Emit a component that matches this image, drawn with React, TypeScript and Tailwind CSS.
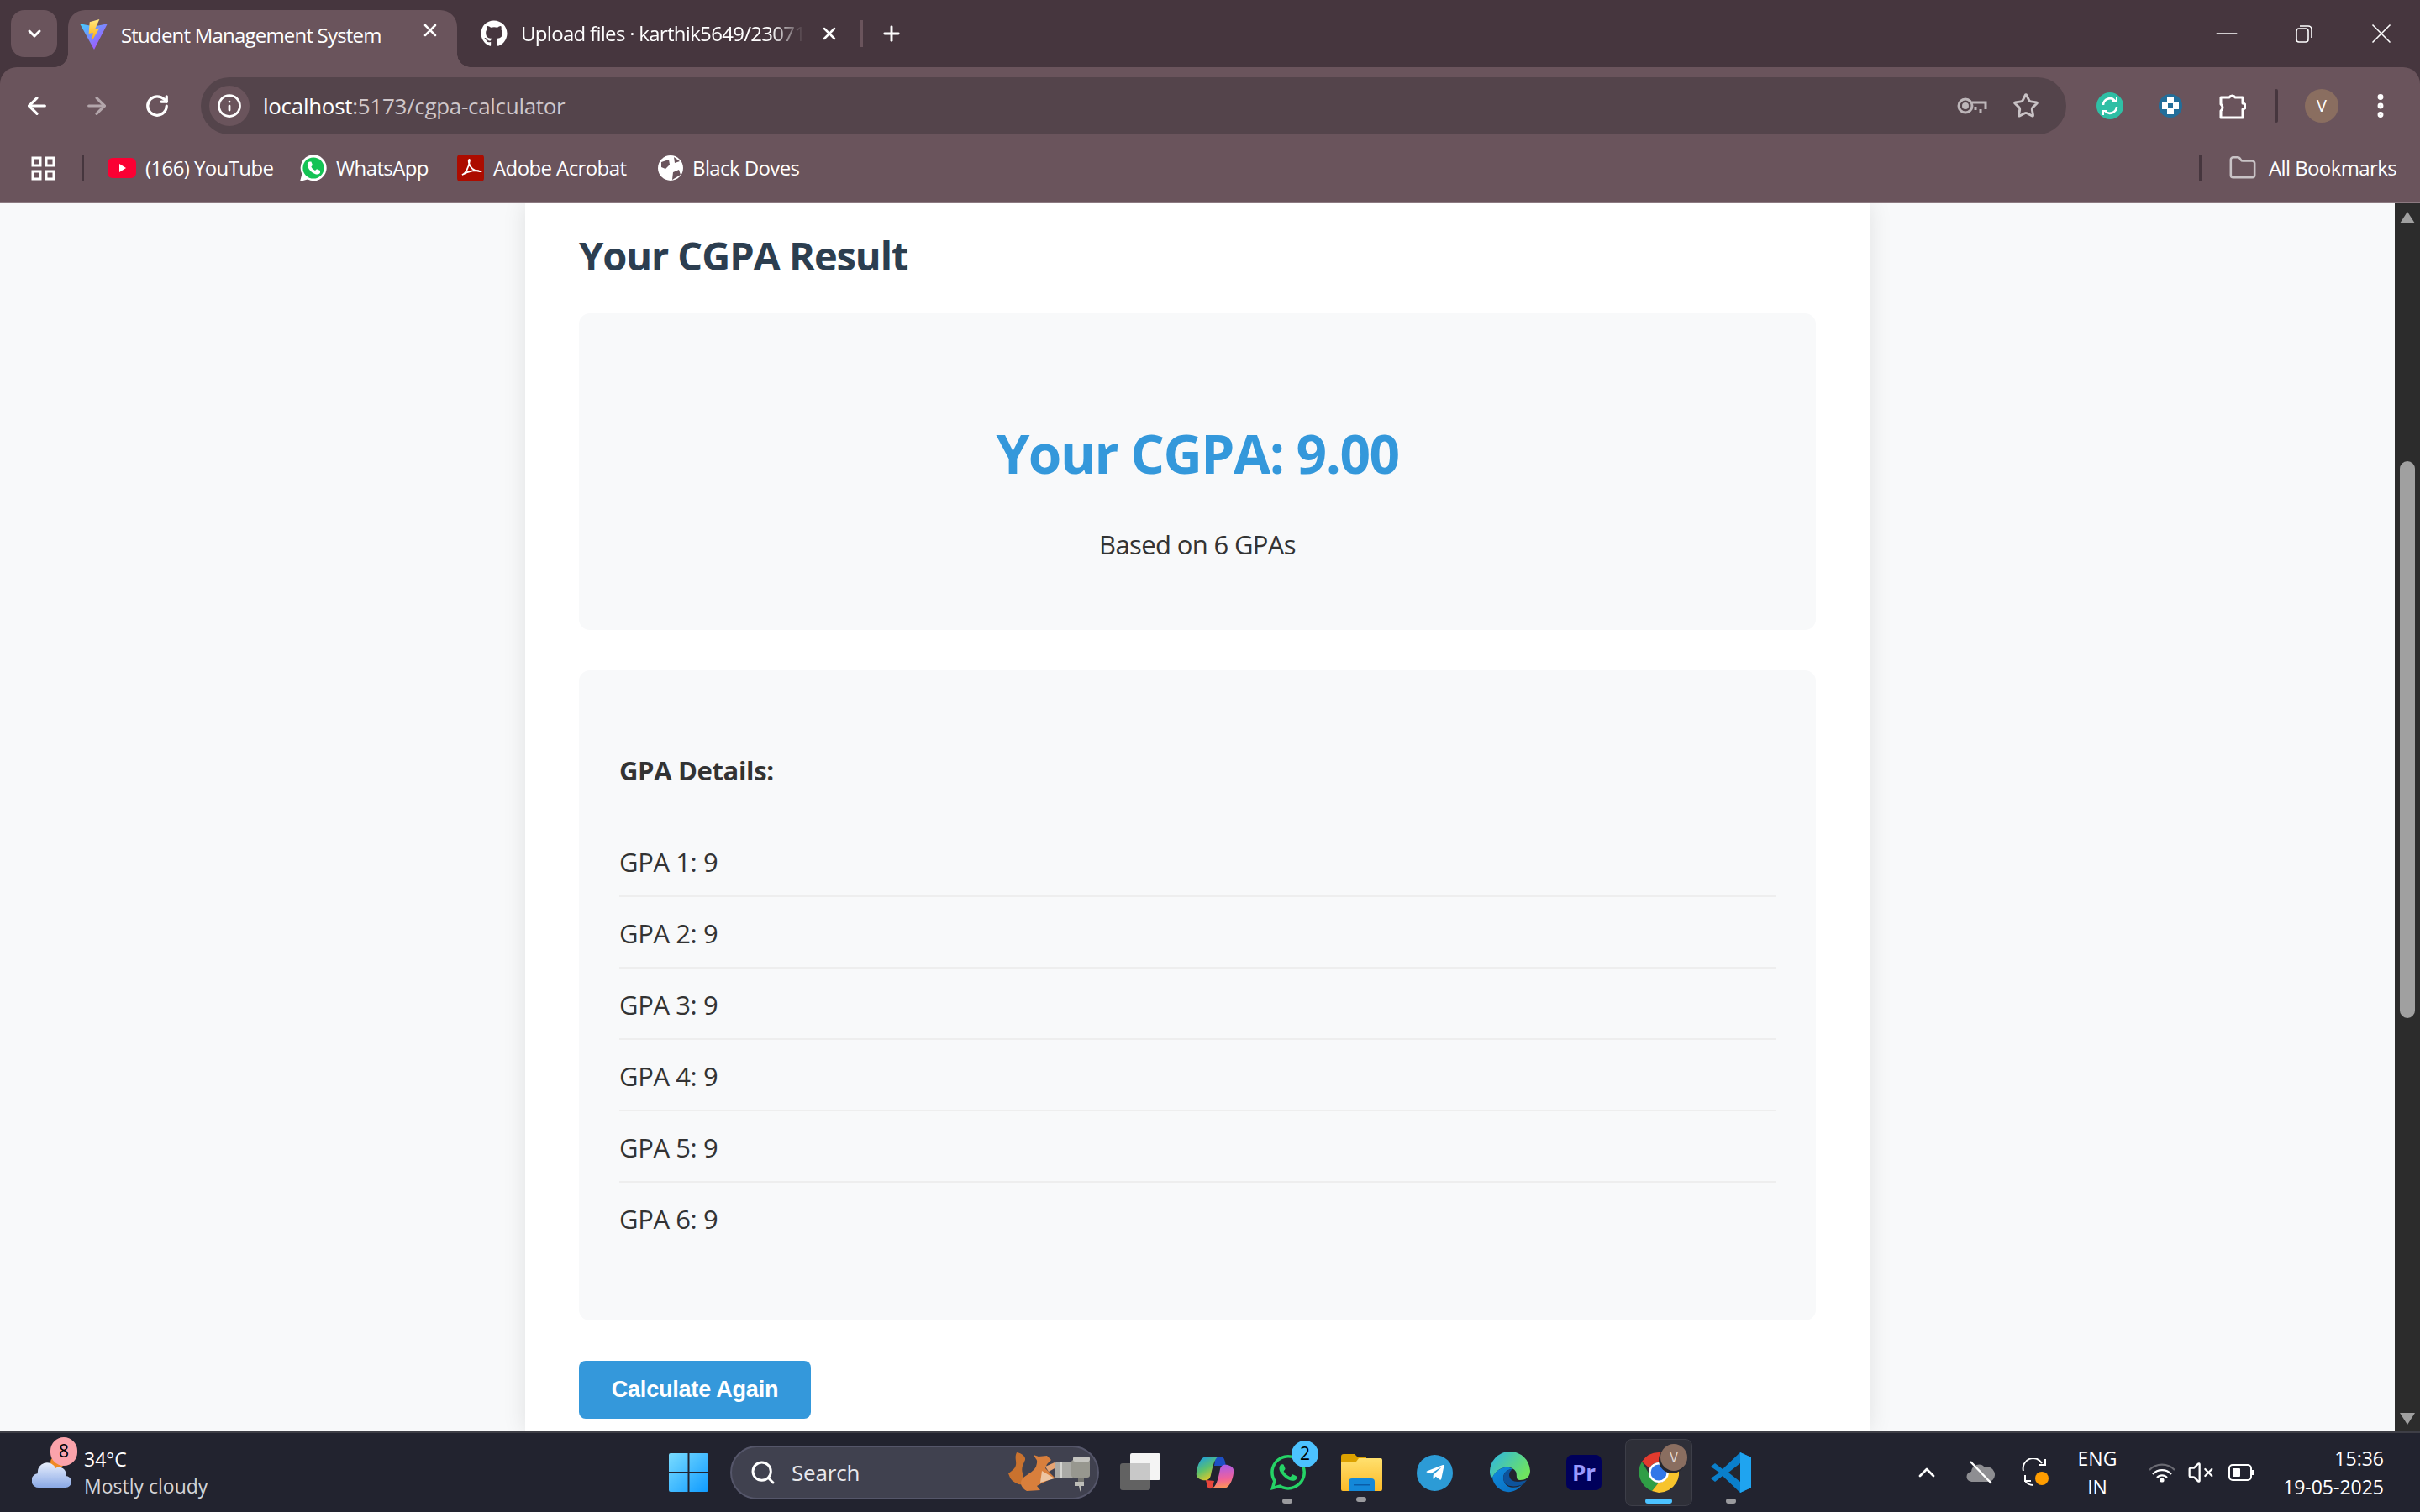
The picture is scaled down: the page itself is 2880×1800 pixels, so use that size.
import { ArrowLeft, ArrowRight, ChevronDown, ChevronUp, EllipsisVertical, Folder, Info, Minus, Plus, RotateCw, Search, Star, VolumeX, X } from 'lucide-react'
import { FaGithub, FaTelegramPlane, FaWhatsapp } from 'react-icons/fa'

const gpas = [1, 2, 3, 4, 5, 6]

function ViteLogo() {
  return (
    <svg viewBox="0 0 32 34" className="h-[36px] w-[34px]">
      <defs>
        <linearGradient id="vite-a" x1="0" y1="0" x2="1" y2="1">
          <stop offset="0" stopColor="#41d1ff" />
          <stop offset="1" stopColor="#bd34fe" />
        </linearGradient>
        <linearGradient id="vite-b" x1="0" y1="0" x2="0" y2="1">
          <stop offset="0" stopColor="#ffea83" />
          <stop offset="1" stopColor="#ffa800" />
        </linearGradient>
      </defs>
      <path d="M0 5 L16 8 L31 5 L16 34 Z" fill="url(#vite-a)" />
      <path d="M22 0 L11 3 L10 16 L15 15 L13 25 L22 10 L17 11 Z" fill="url(#vite-b)" />
    </svg>
  )
}

function KeyIcon() {
  return (
    <svg viewBox="0 0 36 26" className="h-[26px] w-[36px]" fill="none" stroke="#bdb6b9" strokeWidth="3">
      <circle cx="10" cy="13" r="8" />
      <circle cx="10" cy="13" r="2.5" fill="#bdb6b9" />
      <path d="M18 9 H34 V17 M28 17 V21 M22 14 V18" />
    </svg>
  )
}

function SyncExtension() {
  return (
    <svg viewBox="0 0 32 32" className="h-[32px] w-[32px]" fill="none" stroke="#fff" strokeWidth="2.6">
      <circle cx="16" cy="16" r="16" fill="#2fbfa5" stroke="none" />
      <path d="M8 15 A8 8 0 0 1 22 10" />
      <path d="M24 17 A8 8 0 0 1 10 22" />
      <path d="M19 10 H24 V5 M13 22 H8 V27" strokeWidth="2" />
    </svg>
  )
}

function BlueExtension() {
  return (
    <svg viewBox="0 0 28 28" className="h-[28px] w-[28px]">
      <circle cx="14" cy="14" r="14" fill="#236e9a" />
      <path d="M10 4 H18 V10 H24 V18 H18 V24 H10 V18 H4 V10 H10 Z" fill="#fff" />
      <rect x="11" y="11" width="6" height="6" fill="#236e9a" />
    </svg>
  )
}

function PuzzleIcon() {
  return (
    <svg viewBox="0 0 32 32" className="h-[32px] w-[32px]" fill="none" stroke="#fff" strokeWidth="3" strokeLinejoin="round">
      <path d="M2 6 H12 A4 4 0 0 1 19 6 H28 V13 A3.5 3.5 0 0 1 28 20 V30 H2 V22 A5 5 0 0 0 2 14 Z" />
    </svg>
  )
}

function AppsIcon() {
  return (
    <svg viewBox="0 0 29 29" className="h-[29px] w-[29px]" fill="none" stroke="#fff" strokeWidth="3">
      <rect x="2" y="2" width="9" height="9" />
      <rect x="18" y="2" width="9" height="9" />
      <rect x="2" y="18" width="9" height="9" />
      <rect x="18" y="18" width="9" height="9" />
    </svg>
  )
}

function YoutubeIcon() {
  return (
    <svg viewBox="0 0 34 24" className="h-[24px] w-[34px]">
      <rect width="34" height="24" rx="6" fill="#fb0033" />
      <path d="M14 7 L22 12 L14 17 Z" fill="#fff" />
    </svg>
  )
}

function WhatsappBookmark() {
  return (
    <svg viewBox="0 0 32 32" className="h-[32px] w-[32px]">
      <path d="M0 32 L2.4 23 A15.5 15.5 0 1 1 9 29.6 Z" fill="#fff" />
      <circle cx="16" cy="16" r="12.6" fill="#14c354" />
      <path d="M11 8.5 L13.4 8.5 L15 12.6 L13.4 14.6 C14.4 16.8 15.8 18 18 19 L20 17.2 L24 19 L24 21.4 C23 23.4 20.6 24 18.4 23.2 C13.8 21.6 10.8 18.6 9.2 14 C8.4 11.8 9 9.6 11 8.5 Z" fill="#fff" />
    </svg>
  )
}

function AcrobatIcon() {
  return (
    <svg viewBox="0 0 32 32" className="h-[32px] w-[32px]" fill="none">
      <rect width="32" height="32" rx="4" fill="#ac0c00" />
      <path d="M6 24 C10 23 14 15 15 7 C15 5 13 6 14 10 C15 15 20 20 27 20 C24 18 14 19 6 24 Z" stroke="#fff" strokeWidth="1.8" />
    </svg>
  )
}

function GlobeIcon() {
  return (
    <svg viewBox="0 0 30 30" className="h-[30px] w-[30px]">
      <circle cx="15" cy="15" r="15" fill="#fff" />
      <path d="M4 8 L13 5 L14 11 L9 16 L4 14 Z M17 29 L18 20 L25 17 L27 23 Z M19 2 L26 7 L20 9 Z" fill="#6a545c" />
    </svg>
  )
}

function WeatherIcon() {
  return (
    <svg viewBox="0 0 48 40" className="h-[40px] w-[48px]">
      <defs>
        <linearGradient id="cloud" x1="0" y1="0" x2="0" y2="1">
          <stop offset="0" stopColor="#e7eefc" />
          <stop offset="1" stopColor="#8aa9e6" />
        </linearGradient>
      </defs>
      <circle cx="30" cy="8" r="8" fill="#f08a24" />
      <path d="M9 38 A8.5 8.5 0 0 1 7 21 A11 11 0 0 1 28 15 A8 8 0 0 1 40 24 A7 7 0 0 1 40 38 Z" fill="url(#cloud)" />
    </svg>
  )
}

function WindowsLogo() {
  return (
    <svg viewBox="0 0 47 46" className="h-[46px] w-[47px]">
      <defs>
        <linearGradient id="win" x1="0" y1="0" x2="1" y2="1">
          <stop offset="0" stopColor="#7adcff" />
          <stop offset="1" stopColor="#0f9bff" />
        </linearGradient>
      </defs>
      <path d="M0 2 A2 2 0 0 1 2 0 H22.5 V22 H0 Z M24.5 0 H45 A2 2 0 0 1 47 2 V22 H24.5 Z M0 24 H22.5 V46 H2 A2 2 0 0 1 0 44 Z M24.5 24 H47 V44 A2 2 0 0 1 45 46 H24.5 Z" fill="url(#win)" />
    </svg>
  )
}

function SquirrelCamera() {
  return (
    <svg viewBox="0 0 100 48" className="h-[48px] w-[100px]">
      <path d="M10 0 C16 1 21 5 20 9 C18 14 15 18 17 25 L20 38 C14 40 5 36 2 30 L0 25 C4 22 8 20 9 15 C10 10 7 6 10 0 Z" fill="#c9722e" />
      <path d="M30 3 L36 5 L46 4 L51 9 L46 14 L44 19 L55 30 C48 33 40 36 34 40 L38 45 L22 46 C15 42 13 36 17 31 C22 26 29 24 33 17 C34 13 35 10 33 8 Z" fill="#d97f3c" />
      <path d="M44 17 L55 12 L57 18 L48 23 Z" fill="#e6a473" />
      <path d="M40 22 L55 31 L38 36 Z" fill="#edc4a0" />
      <rect x="55" y="12" width="22" height="19" rx="2" fill="#aaaaa6" />
      <rect x="61" y="12" width="3" height="19" fill="#d4d4d0" />
      <rect x="75" y="9" width="22" height="21" rx="3" fill="#97978f" />
      <rect x="77" y="5" width="20" height="6" rx="2" fill="#c4c4c0" />
      <rect x="83" y="30" width="7" height="5" fill="#777772" />
      <path d="M79 35 H90 V40 H87 L85.5 47 L84 40 H79 Z" fill="#bdbdb8" />
    </svg>
  )
}

function TaskViewIcon() {
  return (
    <svg viewBox="0 0 49 46" className="h-[46px] w-[49px]">
      <rect x="0" y="12" width="36" height="32" rx="3" fill="#626262" />
      <rect x="12" y="0" width="36" height="32" rx="2" fill="#f4f4f4" />
      <rect x="12" y="12" width="24" height="20" fill="#c8c8c8" />
    </svg>
  )
}

function CopilotIcon() {
  return (
    <svg viewBox="0 0 46 42" className="h-[42px] w-[46px]">
      <defs>
        <linearGradient id="cop-a" x1="0.2" y1="0" x2="0.7" y2="1">
          <stop offset="0" stopColor="#1b9de2" />
          <stop offset="0.5" stopColor="#5ec16b" />
          <stop offset="1" stopColor="#f7c81e" />
        </linearGradient>
        <linearGradient id="cop-b" x1="0.5" y1="0" x2="0.6" y2="1">
          <stop offset="0" stopColor="#a95bea" />
          <stop offset="0.6" stopColor="#f0629a" />
          <stop offset="1" stopColor="#fd9a52" />
        </linearGradient>
      </defs>
      <path d="M24 2 H31 C34 3 35 8 36 13 L22 13 C23 8 23 5 24 2 Z" fill="#1d4fc4" />
      <path d="M12 2 H27 C23 4 21 10 18 24 C17 30 12 31 8 30 C2 28 0 26 1 20 C2 12 6 3 12 2 Z" fill="url(#cop-a)" />
      <path d="M12 30 L22 31 L20 38 C19 41 15 41 14 38 Z" fill="#e8463c" />
      <path d="M34 40 H19 C24 38 26 32 29 17 C30 12 34 11 38 12 C44 14 46 16 45 22 C44 30 40 39 34 40 Z" fill="url(#cop-b)" />
    </svg>
  )
}

function FolderIcon() {
  return (
    <svg viewBox="0 0 49 44" className="h-[44px] w-[49px]">
      <defs>
        <linearGradient id="folder" x1="0" y1="0" x2="0" y2="1">
          <stop offset="0" stopColor="#ffe06e" />
          <stop offset="1" stopColor="#fdbb28" />
        </linearGradient>
      </defs>
      <path d="M0 3 A3 3 0 0 1 3 0 H16 L20 4 H30 V12 H0 Z" fill="#dca100" />
      <path d="M0 9 L18 9 L21 5 H47 A2 2 0 0 1 49 7 V42 A2 2 0 0 1 47 44 H2 A2 2 0 0 1 0 42 Z" fill="url(#folder)" />
      <path d="M9 44 V33 A4 4 0 0 1 13 29 H36 A4 4 0 0 1 40 33 V44 Z" fill="#1488d8" />
      <rect x="15" y="36" width="19" height="1.5" fill="#0a5da8" />
    </svg>
  )
}

function TelegramIcon() {
  return (
    <span className="flex h-[43px] w-[43px] items-center justify-center rounded-full bg-[#2c9bd6]">
      <FaTelegramPlane className="h-[24px] w-[24px] text-white" />
    </span>
  )
}

function EdgeIcon() {
  return (
    <svg viewBox="0 0 48 48" className="h-[48px] w-[48px]">
      <defs>
        <linearGradient id="edge-a" x1="0" y1="0" x2="1" y2="0.6">
          <stop offset="0" stopColor="#2bb4e8" />
          <stop offset="1" stopColor="#6fe35f" />
        </linearGradient>
        <linearGradient id="edge-b" x1="0" y1="0" x2="1" y2="1">
          <stop offset="0" stopColor="#0f8ddd" />
          <stop offset="1" stopColor="#0a6cc0" />
        </linearGradient>
      </defs>
      <path d="M0 24 A24 24 0 0 1 48 22 C48 30 42 33 36 33 C30 33 33 27 31 23 C27 15 10 15 3 30 C1 28 0 26 0 24 Z" fill="url(#edge-a)" />
      <path d="M3 30 C8 18 22 15 27 20 C19 20 14 27 17 35 C20 43 32 44 39 38 C33 46 24 49 16 46 C8 43 4 36 3 30 Z M0 24 L3 30 L1 29 Z" fill="url(#edge-b)" />
      <path d="M27 20 C19 20 14 27 17 35 C20 41 30 42 40 38 L44 33 C38 35 30 36 26 33 C21 28 23 23 27 20 Z" fill="#0d539c" />
    </svg>
  )
}

function ChromeIcon() {
  return (
    <svg viewBox="0 0 48 48" className="h-[48px] w-[48px]">
      <path d="M24 0 A24 24 0 0 1 45 12 H24 A12 12 0 0 0 13 19 L4 11 A24 24 0 0 1 24 0 Z" fill="#e33b2e" />
      <path d="M4 11 L14 28 A12 12 0 0 0 24 36 L16 46 A24 24 0 0 1 4 11 Z" fill="#2f9e46" />
      <path d="M45 12 A24 24 0 0 1 24 48 L16 46 L24 36 A12 12 0 0 0 34 18 Z" fill="#f7c42c" />
      <circle cx="24" cy="24" r="12" fill="#fff" />
      <circle cx="24" cy="24" r="9.5" fill="#3178e8" />
    </svg>
  )
}

function VsCodeIcon() {
  return (
    <svg viewBox="0 0 48 48" className="h-[48px] w-[48px]">
      <path d="M35 0 L48 6 V42 L35 48 L14 28 L5 35 L0 31 L10 24 L0 17 L5 13 L14 20 Z" fill="#0a7fcb" />
      <path d="M35 0 L48 6 V42 L35 48 Z" fill="#1fa4f0" />
      <path d="M35 13 L21 24 L35 35 Z" fill="#23262f" />
    </svg>
  )
}

function CloudOffIcon() {
  return (
    <svg viewBox="0 0 34 28" className="h-[28px] w-[34px]" fill="none">
      <path d="M7 25 A6 6 0 0 1 6 13 A9 9 0 0 1 22 8 A7 7 0 0 1 28 25 Z" fill="#8e8e92" />
      <path d="M5 1 L30 27" stroke="#fff" strokeWidth="2.4" />
    </svg>
  )
}

function SyncTrayIcon() {
  return (
    <svg viewBox="0 0 34 34" className="h-[34px] w-[34px]" fill="none" stroke="#fff" strokeWidth="2">
      <path d="M2 15 A12 12 0 0 1 24 6" />
      <path d="M28 1 V8 H21" />
      <path d="M4 20 V27 H11" />
      <path d="M4 27 A12 12 0 0 0 14 32" />
      <circle cx="24" cy="24" r="8" fill="#ff9d00" stroke="none" />
    </svg>
  )
}

function WifiIcon() {
  return (
    <svg viewBox="0 0 32 24" className="h-[24px] w-[32px]" fill="none" stroke="#fff" strokeWidth="2.2">
      <path d="M1 9 A21 21 0 0 1 31 9" stroke="#6a6a72" />
      <path d="M5 14 A15 15 0 0 1 27 14" />
      <path d="M10 18 A8 8 0 0 1 22 18" />
      <circle cx="16" cy="21" r="2.6" fill="#fff" stroke="none" />
    </svg>
  )
}

function BatteryIcon() {
  return (
    <svg viewBox="0 0 32 20" className="h-[20px] w-[32px]" fill="none" stroke="#fff" strokeWidth="2">
      <rect x="1" y="1" width="26" height="18" rx="4" />
      <rect x="5" y="5" width="9" height="10" rx="1" fill="#fff" stroke="none" />
      <path d="M28 7 H31 V13 H28 Z" fill="#fff" stroke="none" />
    </svg>
  )
}

function Bookmark({ icon, label, width }: { icon: React.ReactNode; label: string; width: string }) {
  return (
    <div className={`flex items-center gap-[11px] ${width}`}>
      {icon}
      <span className="whitespace-nowrap text-[24px] tracking-[-0.6px] text-white">{label}</span>
    </div>
  )
}

function Browser() {
  return (
    <div className="shrink-0 bg-[#46363e] font-['Open_Sans',sans-serif] text-white">
      {/* tab strip */}
      <div className="flex h-[80px] items-start pt-[12px]">
        <div className="ml-[13px] flex h-[56px] w-[55px] items-center justify-center rounded-[16px] bg-[#6a545c]">
          <ChevronDown className="h-[24px] w-[24px]" strokeWidth={3} />
        </div>
        <div className="relative ml-[13px] flex h-[68px] w-[463px] items-start rounded-t-[20px] bg-[#6a545c] pl-[14px] pt-[11px]">
          <div className="absolute bottom-0 left-[-16px] h-[16px] w-[16px] bg-[radial-gradient(circle_at_0_0,transparent_15.5px,#6a545c_16px)]" />
          <div className="absolute bottom-0 right-[-16px] h-[16px] w-[16px] bg-[radial-gradient(circle_at_100%_0,transparent_15.5px,#6a545c_16px)]" />
          <ViteLogo />
          <span className="ml-[15px] mt-[3px] whitespace-nowrap text-[24px] leading-[32px] tracking-[-0.8px]">Student Management System</span>
          <X className="absolute right-[20px] top-[12px] h-[24px] w-[24px]" strokeWidth={2.5} />
        </div>
        <div className="ml-[28px] mt-[12px] flex items-start">
          <FaGithub className="h-[32px] w-[32px]" />
          <span className="ml-[16px] w-[337px] overflow-hidden whitespace-nowrap text-[24px] leading-[32px] tracking-[-0.7px] [mask-image:linear-gradient(to_right,black_88%,transparent)]">Upload files · karthik5649/23071</span>
          <X className="ml-[18px] mt-[4px] h-[24px] w-[24px] shrink-0" strokeWidth={2.5} />
          <div className="ml-[25px] mt-[0px] h-[32px] w-[3px] shrink-0 bg-[#6a545c]" />
          <Plus className="ml-[20px] mt-[2px] h-[28px] w-[28px] shrink-0" strokeWidth={2.5} />
        </div>
        <div className="ml-auto mr-[26px] mt-[8px] flex items-center gap-[52px]">
          <Minus className="h-[40px] w-[40px]" strokeWidth={1} />
          <div className="flex h-[40px] w-[40px] items-center justify-center">
            <svg viewBox="0 0 20 22" className="h-[22px] w-[20px]" fill="none" stroke="#fff" strokeWidth="1.6">
              <rect x="1" y="5" width="14" height="16" rx="3" />
              <path d="M5 2 H15 A4 4 0 0 1 19 6 V16" />
            </svg>
          </div>
          <X className="h-[40px] w-[40px]" strokeWidth={1} />
        </div>
      </div>
      {/* toolbar and bookmarks */}
      <div className="rounded-t-[20px] border-b-2 border-[#8c7a81] bg-[#6a545c] pt-[6px]">
        <div className="flex h-[80px] items-center pl-[28px]">
          <ArrowLeft className="h-[32px] w-[32px]" strokeWidth={2.4} />
          <ArrowRight className="ml-[39px] h-[32px] w-[32px] text-[#b3a6ab]" strokeWidth={2.4} />
          <RotateCw className="ml-[41px] h-[30px] w-[30px]" strokeWidth={2.6} />
          <div className="ml-[37px] flex h-[68px] w-[2220px] items-center rounded-full bg-[#54444b] pl-[10px] pr-[32px]">
            <div className="flex h-[48px] w-[48px] items-center justify-center rounded-full bg-[#6a545c]">
              <Info className="h-[30px] w-[30px]" strokeWidth={2.2} />
            </div>
            <span className="ml-[16px] text-[26px] tracking-[-0.3px]">
              localhost<span className="text-[#cfc7ca]">:5173/cgpa-calculator</span>
            </span>
            <div className="ml-auto flex items-center gap-[30px]">
              <KeyIcon />
              <Star className="h-[32px] w-[32px] text-[#c9c3c6]" strokeWidth={2.2} />
            </div>
          </div>
          <div className="ml-[36px]"><SyncExtension /></div>
          <div className="ml-[42px]"><BlueExtension /></div>
          <div className="ml-[44px]"><PuzzleIcon /></div>
          <div className="ml-[34px] h-[40px] w-[4px] rounded-full bg-[#46363e]" />
          <div className="ml-[32px] flex h-[40px] w-[40px] items-center justify-center rounded-full bg-[#8a6e60] text-[20px]">V</div>
          <EllipsisVertical className="ml-[32px] h-[36px] w-[36px]" strokeWidth={2.6} />
        </div>
        <div className="flex h-[74px] items-center pb-[6px] pl-[37px]">
          <AppsIcon />
          <div className="ml-[31px] mr-[28px] h-[32px] w-[3px] bg-[#46363e]" />
          <Bookmark icon={<YoutubeIcon />} label="(166) YouTube" width="w-[229px]" />
          <Bookmark icon={<WhatsappBookmark />} label="WhatsApp" width="w-[187px]" />
          <Bookmark icon={<AcrobatIcon />} label="Adobe Acrobat" width="w-[239px]" />
          <Bookmark icon={<GlobeIcon />} label="Black Doves" width="w-[1834px]" />
          <div className="h-[32px] w-[3px] bg-[#46363e]" />
          <Folder className="ml-[32px] h-[34px] w-[34px] text-[#c9c3c6]" strokeWidth={1.8} />
          <span className="ml-[14px] whitespace-nowrap text-[24px] tracking-[-0.6px]">All Bookmarks</span>
        </div>
      </div>
    </div>
  )
}

function ScrollBar() {
  return (
    <div className="flex w-[30px] shrink-0 flex-col items-center bg-[#2c2c2c] pb-[8px] pt-[10px]">
      <div className="h-0 w-0 border-x-[9px] border-b-[14px] border-x-transparent border-b-[#a0a0a0]" />
      <div className="mt-[283px] h-[663px] w-[18px] rounded-full bg-[#a0a0a0]" />
      <div className="mt-auto h-0 w-0 border-x-[9px] border-t-[14px] border-x-transparent border-t-[#a0a0a0]" />
    </div>
  )
}

function Page() {
  return (
    <div className="flex min-h-0 flex-1 bg-[#f8f9fa]">
      <main className="flex min-w-0 flex-1 justify-center overflow-hidden font-['Open_Sans',sans-serif]">
        <div className="w-[1600px] bg-white px-[64px] pt-[30px] shadow-[0_0_26px_rgba(0,0,0,0.1)]">
          <h2 className="text-[47px] font-bold leading-[64px] tracking-[-1.1px] text-[#2c3e50]">Your CGPA Result</h2>
          <section className="mt-[37px] flex h-[377px] flex-col items-center rounded-[13px] bg-[#f8f9fa] pt-[122px]">
            <h3 className="text-[64px] font-bold leading-[90px] tracking-[-1.5px] text-[#3498db]">Your CGPA: 9.00</h3>
            <p className="mt-[43px] text-[31px] leading-[40px] tracking-[-0.65px] text-[#333333]">Based on 6 GPAs</p>
          </section>
          <section className="mt-[48px] h-[774px] rounded-[13px] bg-[#f8f9fa] px-[48px] pt-[96px]">
            <h4 className="text-[31px] font-bold leading-[46px] tracking-[-0.35px] text-[#333333]">GPA Details:</h4>
            <ul className="mt-[43px]">
              {gpas.map((n) => (
                <li key={n} className="h-[85px] border-b-2 border-[#eeeeee] pt-[21px] text-[31px] leading-[44px] tracking-[-0.4px] text-[#333333] last:border-b-0">
                  GPA {n}: 9
                </li>
              ))}
            </ul>
          </section>
          <button className="mt-[48px] h-[69px] w-[276px] rounded-[8px] bg-[#3498db] font-['Liberation_Sans',sans-serif] text-[27px] font-bold tracking-[-0.2px] text-white">
            Calculate Again
          </button>
        </div>
      </main>
      <ScrollBar />
    </div>
  )
}

function Taskbar() {
  return (
    <footer className="flex h-[96px] shrink-0 items-center border-t-2 border-[#3e3e46] bg-[#22232f] font-['Open_Sans',sans-serif] text-white">
      <div className="relative ml-[38px] w-[48px]">
        <WeatherIcon />
        <span className="absolute left-[22px] top-[-22px] flex h-[34px] w-[32px] items-center justify-center rounded-full bg-[#fba3ab] text-[21px] text-black">8</span>
      </div>
      <div className="ml-[14px] w-[200px] text-[23px] leading-[32px]">
        <div>34°C</div>
        <div className="text-[#d4d4d8]">Mostly cloudy</div>
      </div>
      <div className="ml-[496px]"><WindowsLogo /></div>
      <div className="ml-[26px] flex h-[64px] w-[439px] items-center rounded-full border-2 border-[#55566a] bg-[#40414f] pl-[21px]">
        <Search className="h-[32px] w-[32px] text-white" strokeWidth={2.2} />
        <span className="ml-[18px] text-[26px] tracking-[-0.2px] text-[#e8e8ec]">Search</span>
        <div className="ml-auto mr-[6px]"><SquirrelCamera /></div>
      </div>
      <div className="ml-[25px]"><TaskViewIcon /></div>
      <div className="ml-[41px]"><CopilotIcon /></div>
      <div className="relative ml-[40px] h-[48px] w-[48px]">
        <FaWhatsapp className="h-[48px] w-[48px] text-[#25d366]" />
        <span className="absolute left-[28px] top-[-14px] flex h-[32px] w-[32px] items-center justify-center rounded-full bg-[#4cc2ff] text-[21px] text-black">2</span>
        <span className="absolute left-[17px] top-[55px] h-[6px] w-[12px] rounded-full bg-[#9a9a9e]" />
      </div>
      <div className="relative ml-[39px] h-[44px] w-[49px]">
        <FolderIcon />
        <span className="absolute left-[18px] top-[51px] h-[6px] w-[12px] rounded-full bg-[#9a9a9e]" />
      </div>
      <div className="ml-[41px]"><TelegramIcon /></div>
      <div className="ml-[44px]"><EdgeIcon /></div>
      <div className="ml-[43px] flex h-[42px] w-[42px] items-center justify-center rounded-[7px] bg-[#00005b] text-[26px] font-bold text-[#9999ff]">Pr</div>
      <div className="relative ml-[28px] flex h-[80px] w-[80px] items-center justify-center rounded-[8px] border border-[#3d3e48] bg-[#2e2f38]">
        <ChromeIcon />
        <span className="absolute left-[41px] top-[5px] flex h-[32px] w-[32px] items-center justify-center rounded-full bg-[#8a6e60] text-[16px] text-[#e4dcd8] shadow-[-2px_3px_0_#26272e]">V</span>
        <span className="absolute bottom-[2px] left-[23px] h-[6px] w-[32px] rounded-full bg-[#4cc2ff]" />
      </div>
      <div className="relative ml-[22px] h-[48px] w-[48px]">
        <VsCodeIcon />
        <span className="absolute left-[18px] top-[55px] h-[6px] w-[12px] rounded-full bg-[#9a9a9e]" />
      </div>
      <ChevronUp className="ml-[193px] h-[32px] w-[32px]" strokeWidth={2} />
      <div className="ml-[31px]"><CloudOffIcon /></div>
      <div className="ml-[32px]"><SyncTrayIcon /></div>
      <div className="ml-[26px] w-[60px] text-center text-[23px] leading-[34px]">
        <div>ENG</div>
        <div>IN</div>
      </div>
      <div className="ml-[31px]"><WifiIcon /></div>
      <VolumeX className="ml-[14px] h-[32px] w-[32px]" strokeWidth={1.7} />
      <div className="ml-[17px]"><BatteryIcon /></div>
      <div className="ml-[30px] w-[123px] whitespace-nowrap text-right text-[23px] leading-[34px]">
        <div>15:36</div>
        <div>19-05-2025</div>
      </div>
    </footer>
  )
}

export default function App() {
  return (
    <div className="flex h-[1800px] w-[2880px] flex-col overflow-hidden">
      <Browser />
      <Page />
      <Taskbar />
    </div>
  )
}
